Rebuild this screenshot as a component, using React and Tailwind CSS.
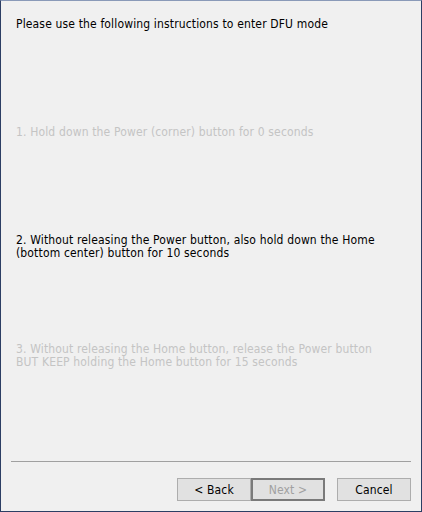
import React from "react";

const font = { fontFamily: "'DejaVu Sans Condensed', 'DejaVu Sans', sans-serif" };

const Step = ({ children, active, className }) => (
  <p
    className={`text-[12px] leading-[13px] tracking-[0.15px] ${
      active ? "text-[#000000]" : "text-[#c4c4c4]"
    } ${className}`}
  >
    {children}
  </p>
);

const WinButton = ({ children, disabled, isDefault }) => (
  <button
    className={`w-[74px] h-[23px] flex items-center justify-center text-[12px] tracking-[0.15px] bg-[#e1e1e1] ${
      isDefault ? "border-2 border-[#7a7a7a]" : "border border-[#adadad]"
    } ${disabled ? "text-[#a0a0a0]" : "text-[#000000]"}`}
  >
    {children}
  </button>
);

export default function App() {
  return (
    <div
      className="w-[422px] h-[512px] bg-[#f0f0f0] border-x border-b border-[#2c3e64] border-t border-t-[#8a9ab8] flex flex-col"
      style={font}
    >
      <div className="pl-[15px] pr-2 flex-1">
        <Step active className="mt-[17px]">Please use the following instructions to enter DFU mode</Step>
        <Step className="mt-[95px]">1. Hold down the Power (corner) button for 0 seconds</Step>
        <Step active className="mt-[95px]">
          2. Without releasing the Power button, also hold down the Home
          <br />
          (bottom center) button for 10 seconds
        </Step>
        <Step className="mt-[83px]">
          3. Without releasing the Home button, release the Power button
          <br />
          BUT KEEP holding the Home button for 15 seconds
        </Step>
      </div>
      <div className="mx-[10px] border-t border-[#a0a0a0]" />
      <div className="flex justify-end pr-[10px] pt-4 pb-[10px]">
        <WinButton>&lt; Back</WinButton>
        <WinButton disabled isDefault>Next &gt;</WinButton>
        <div className="ml-[12px]">
          <WinButton>Cancel</WinButton>
        </div>
      </div>
    </div>
  );
}
